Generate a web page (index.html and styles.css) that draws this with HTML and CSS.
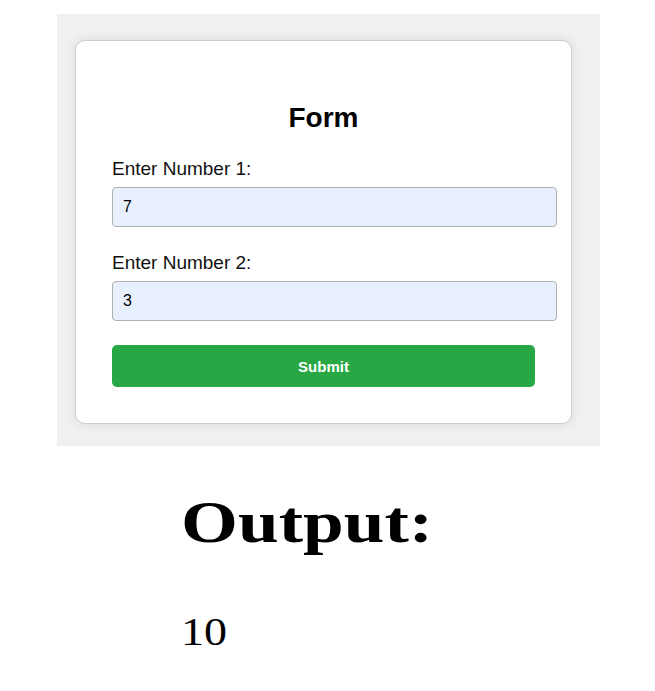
FILE: index.html
```html
<!DOCTYPE html>
<html>
<head>
<meta charset="utf-8">
<link rel="stylesheet" href="styles.css">
</head>
<body>
<div class="panel">
  <form class="card">
    <h2 class="title">Form</h2>
    <div class="group">
      <label class="label">Enter Number 1:</label>
      <input class="input" type="text" value="7">
    </div>
    <div class="group">
      <label class="label">Enter Number 2:</label>
      <input class="input" type="text" value="3">
    </div>
    <button class="btn" type="button">Submit</button>
  </form>
</div>
<div class="output">
  <h1 class="out-title">Output:</h1>
  <p class="out-value">10</p>
</div>
</body>
</html>
```
FILE: styles.css
```css
html, body {
  margin: 0;
  padding: 0;
  background: #ffffff;
}
body {
  font-family: "Liberation Sans", Arial, sans-serif;
  color: #000;
}
.panel {
  margin: 14px 0 0 57px;
  width: 543px;
  height: 432px;
  box-sizing: border-box;
  background: #f0f0f0;
  padding: 26px 28px 22px 18px;
}
.card {
  display: block;
  width: 497px;
  box-sizing: border-box;
  background: #ffffff;
  border: 1px solid #cfcfcf;
  border-radius: 10px;
  box-shadow: 0 0 10px rgba(0, 0, 0, 0.1);
  padding: 36px;
}
.title {
  margin: 25px 0 24px;
  font-size: 28px;
  line-height: 32px;
  font-weight: bold;
  text-align: center;
}
.group {
  margin-bottom: 25px;
}
.label {
  display: block;
  font-size: 19px;
  line-height: 22px;
  margin-bottom: 7px;
  color: #111;
}
.input {
  display: block;
  width: 100%;
  height: 18px;
  padding: 10px;
  margin: 0;
  border: 1px solid #b0b0b0;
  border-radius: 4px;
  background: #e8f0fe;
  font-family: "Liberation Sans", Arial, sans-serif;
  font-size: 16px;
  color: #000;
  outline: none;
}
.btn {
  display: block;
  width: 100%;
  height: 42px;
  margin: -1px 0 0;
  border: none;
  border-radius: 5px;
  background: #28a745;
  color: #ffffff;
  font-family: "Liberation Sans", Arial, sans-serif;
  font-size: 15px;
  font-weight: bold;
}
.output {
  padding-left: 181px;
  font-family: "Liberation Serif", "Times New Roman", serif;
}
.out-title {
  width: fit-content;
  margin: 42px 0 0;
  font-size: 60px;
  line-height: 69px;
  font-weight: bold;
  transform: scaleX(1.22);
  transform-origin: left center;
}
.out-value {
  width: fit-content;
  margin: 52px 0 0;
  font-size: 40px;
  line-height: 46px;
  transform: scaleX(1.15);
  transform-origin: left center;
}
```
